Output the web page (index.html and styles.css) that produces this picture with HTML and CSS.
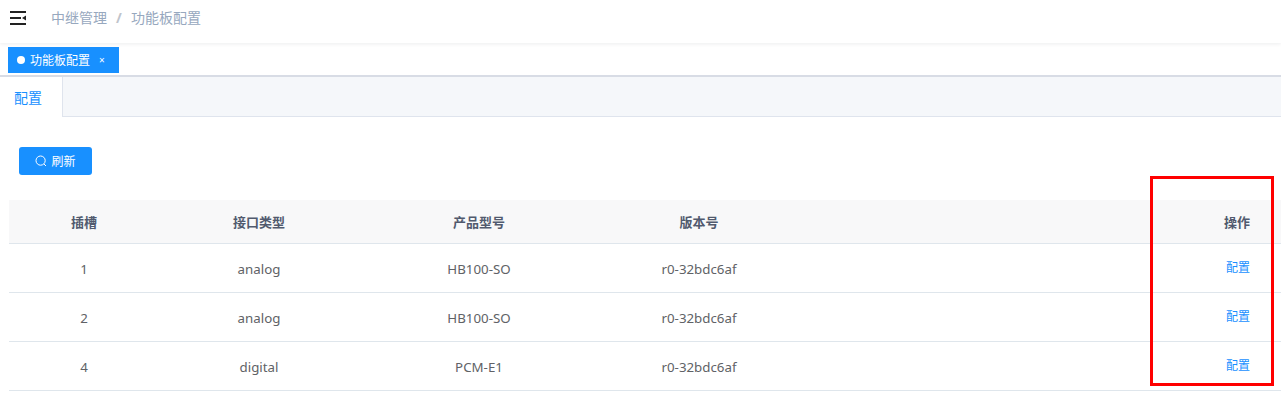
FILE: index.html
```html
<!DOCTYPE html>
<html lang="zh">
<head>
<meta charset="utf-8">
<title>功能板配置</title>
<link rel="stylesheet" href="styles.css">
</head>
<body>
<header class="navbar">
  <svg class="hamburger" viewBox="0 0 16 14" width="16" height="14" aria-hidden="true">
    <path d="M0 0h16v2H0zM0 6h11v2H0zM0 12h16v2H0zM16 4.500v5l-4-2.500z" fill="#222"/>
  </svg>
  <nav class="crumbs"><span>中继管理</span><span class="sep">/</span><span>功能板配置</span></nav>
</header>
<div class="tagsbar">
  <div class="tag"><i class="dot"></i><span>功能板配置</span><span class="close">×</span></div>
</div>
<main class="page">
  <div class="tabs"><div class="tab">配置</div></div>
  <div class="panel">
    <button class="btn" type="button">
      <svg viewBox="0 0 12 12" width="12" height="12" aria-hidden="true"><circle cx="5.600" cy="5.600" r="4.600" fill="none" stroke="#fff" stroke-width="1"/><path d="M9 9l2 2" stroke="#fff" stroke-width="1"/></svg>
      <span>刷新</span>
    </button>
    <table class="grid">
      <thead>
        <tr><th class="c1">插槽</th><th class="c2">接口类型</th><th class="c3">产品型号</th><th class="c4">版本号</th><th class="c5"></th><th class="c6">操作</th></tr>
      </thead>
      <tbody>
        <tr><td>1</td><td>analog</td><td>HB100-SO</td><td>r0-32bdc6af</td><td></td><td class="op"><a>配置</a></td></tr>
        <tr><td>2</td><td>analog</td><td>HB100-SO</td><td>r0-32bdc6af</td><td></td><td class="op"><a>配置</a></td></tr>
        <tr><td>4</td><td>digital</td><td>PCM-E1</td><td>r0-32bdc6af</td><td></td><td class="op"><a>配置</a></td></tr>
      </tbody>
    </table>
  </div>
</main>
<div class="highlight"></div>
</body>
</html>
```
FILE: styles.css
```css
* { box-sizing: border-box; }
html, body { margin: 0; padding: 0; background: #fff; overflow: hidden; }
body {
  position: relative;
  height: 400px;
  font-family: "Noto Sans", "Noto Sans CJK SC", sans-serif;
  font-size: 13px;
  color: #606266;
}
.navbar {
  height: 43px;
  display: flex;
  align-items: center;
  padding: 0 0 7px 10px;
  box-shadow: 0 1px 4px rgba(0, 21, 41, .08);
}
.hamburger { display: block; }
.crumbs { margin-left: 25px; font-size: 14px; color: #97a8be; display: flex; line-height: 20px; }
.sep { margin: 0 9px; width: 6px; font-weight: 700; color: #c0c4cc; }
.tagsbar { height: 34px; padding: 4px 0 0 8px; border-bottom: 2px solid #d8dce5; }
.tag {
  width: 111px;
  height: 26px;
  background: #1890ff;
  color: #fff;
  font-size: 12px;
  display: flex;
  align-items: center;
  padding-left: 9px;
}
.dot { width: 8px; height: 8px; border-radius: 50%; background: #fff; margin-right: 5px; }
.close { margin-left: 9px; font-size: 10px; }
.tabs { height: 40px; background: #f5f7fa; border-bottom: 1px solid #dfe4ed; }
.tab {
  width: 63px;
  height: 40px;
  background: #fff;
  border-right: 1px solid #dfe4ed;
  color: #1890ff;
  font-size: 14px;
  padding-left: 14px;
  line-height: 41px;
}
.panel { padding: 30px 0 0 9px; }
.btn {
  display: flex;
  align-items: center;
  justify-content: center;
  gap: 4px;
  width: 73px;
  height: 28px;
  margin-left: 10px;
  border: 0;
  border-radius: 3px;
  background: #1890ff;
  color: #fff;
  font: inherit;
  font-size: 12px;
  padding: 0;
}
.grid {
  width: 1272px;
  margin-top: 25px;
  border-collapse: collapse;
  table-layout: fixed;
}
.grid th, .grid td {
  text-align: center;
  padding: 0;
  color: #606266;
}
.grid th { height: 43px; font-size: 13px; background: #f8f8f9; font-weight: 700; color: #515a6e; border-bottom: 1px solid #dfe6ec; }
.grid td { height: 49px; padding-top: 2px; font-size: 13.3px; border-bottom: 1px solid #dfe6ec; }
.c1 { width: 150px; }
.c2 { width: 200px; }
.c3 { width: 240px; }
.c4 { width: 200px; }
.c6 { width: 100px; }
.grid .c6, .grid .op { text-align: right; padding-right: 31px; }
.grid .op { padding-top: 0; padding-bottom: 2px; }
.op a { color: #1890ff; font-size: 12px; }
.highlight {
  position: absolute;
  left: 1150px;
  top: 176px;
  width: 124px;
  height: 210px;
  border: 3px solid #f00;
}
```
